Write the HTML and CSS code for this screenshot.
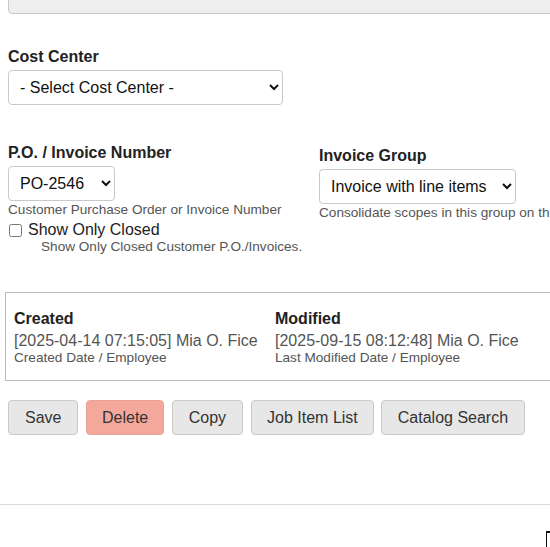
FILE: index.html
```html
<!DOCTYPE html>
<html>
<head>
<meta charset="utf-8">
<link rel="stylesheet" href="styles.css">
</head>
<body>
<div class="topbox"></div>

<div class="field cost">
  <label class="lbl">Cost Center</label>
  <select class="sel sel-cost"><option>- Select Cost Center -</option></select>
</div>

<div class="row2">
  <div class="col-left">
    <label class="lbl">P.O. / Invoice Number</label>
    <select class="sel sel-po"><option>PO-2546</option></select>
    <div class="help">Customer Purchase Order or Invoice Number</div>
    <label class="chk"><input type="checkbox" class="cb"><span>Show Only Closed</span></label>
    <div class="help indent">Show Only Closed Customer P.O./Invoices.</div>
  </div>
  <div class="col-right">
    <label class="lbl">Invoice Group</label>
    <select class="sel sel-grp"><option>Invoice with line items</option></select>
    <div class="help">Consolidate scopes in this group on the invoice</div>
  </div>
</div>

<div class="info">
  <div class="info-col">
    <div class="lbl">Created</div>
    <div class="val">[2025-04-14 07:15:05] Mia O. Fice</div>
    <div class="help">Created Date / Employee</div>
  </div>
  <div class="info-col">
    <div class="lbl">Modified</div>
    <div class="val">[2025-09-15 08:12:48] Mia O. Fice</div>
    <div class="help">Last Modified Date / Employee</div>
  </div>
</div>

<div class="buttons">
  <button class="btn">Save</button>
  <button class="btn btn-del">Delete</button>
  <button class="btn">Copy</button>
  <button class="btn btn-job">Job Item List</button>
  <button class="btn btn-cat">Catalog Search</button>
</div>

<div class="rule"></div>
<div class="corner"></div>
</body>
</html>
```
FILE: styles.css
```css
html, body {
  margin: 0;
  padding: 0;
  overflow: hidden;
  width: 550px;
  height: 547px;
}
body {
  font-family: "Liberation Sans", Arial, sans-serif;
  font-size: 16px;
  color: #222;
  background: #fff;
  position: relative;
}
.topbox {
  margin-left: 8px;
  margin-top: -30px;
  width: 560px;
  height: 42px;
  background: #eeeeee;
  border: 1px solid #c8c8c8;
  border-radius: 4px;
}
.field.cost {
  margin: 34px 0 0 8px;
}
.lbl {
  display: block;
  font-weight: bold;
  font-size: 16px;
  line-height: 18px;
  color: #222;
}
.sel {
  display: block;
  height: 35px;
  margin-top: 4px;
  font-family: "Liberation Sans", Arial, sans-serif;
  font-size: 16px;
  color: #111;
  background: #fff;
  border: 1px solid #c9c9c9;
  border-radius: 4px;
  padding: 0 7px;
}
.sel-cost { width: 275px; }
.sel-po { width: 107px; }
.sel-grp { width: 197px; }
.row2 {
  display: flex;
  margin: 39px 0 0 8px;
}
.col-left { flex: none; width: 311px; }
.col-right { flex: none; padding-top: 3px; }
.help {
  font-size: 13.6px;
  line-height: 15px;
  color: #555;
  margin-top: 1px;
  white-space: nowrap;
}
.indent { margin-left: 33px; margin-top: 0; }
.chk {
  display: flex;
  align-items: center;
  margin-top: 4px;
  font-size: 16px;
  line-height: 18px;
  color: #222;
}
.cb {
  width: 13px;
  height: 13px;
  margin: 0 6px 0 1px;
}
.info {
  display: flex;
  margin: 38px 0 0 5px;
  width: 560px;
  height: 89px;
  border: 1px solid #bbb;
  padding: 17px 0 0 8px;
  box-sizing: border-box;
}
.info-col { flex: none; width: 261px; }
.info .lbl { line-height: 18px; }
.val {
  font-size: 16px;
  line-height: 18px;
  color: #555;
  margin-top: 4px;
}
.info .help { margin-top: 0; }
.buttons {
  display: flex;
  gap: 8px;
  margin: 19px 0 0 8px;
}
.btn {
  height: 35px;
  padding: 0 16px;
  font-family: "Liberation Sans", Arial, sans-serif;
  font-size: 16px;
  color: #333;
  background: #e7e7e7;
  border: 1px solid #cacaca;
  border-radius: 4px;
}
.btn-del { background: #f4a89b; border-color: #e8a296; padding: 0 14.5px; }
.btn-job { padding: 0 15px; }
.btn-cat { margin-left: -1px; }
.rule {
  margin-top: 69px;
  height: 1px;
  background: #dcdcdc;
  width: 550px;
}
.corner {
  position: absolute;
  left: 546px;
  top: 531px;
  width: 10px;
  height: 20px;
  border-left: 1px solid #111;
  border-top: 2px solid #111;
}
```
